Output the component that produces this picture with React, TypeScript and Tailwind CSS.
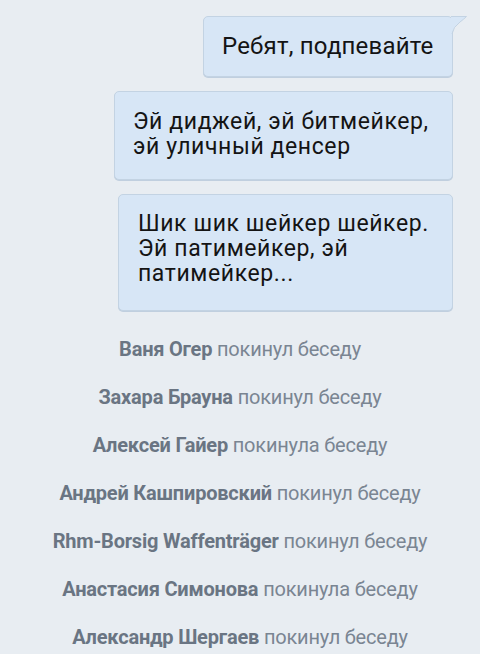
import React from 'react';

interface Notice {
  name: string;
  action: string;
}

const notices: Notice[] = [
  { name: 'Ваня Огер', action: 'покинул беседу' },
  { name: 'Захара Брауна', action: 'покинул беседу' },
  { name: 'Алексей Гайер', action: 'покинула беседу' },
  { name: 'Андрей Кашпировский', action: 'покинул беседу' },
  { name: 'Rhm-Borsig Waffenträger', action: 'покинул беседу' },
  { name: 'Анастасия Симонова', action: 'покинула беседу' },
  { name: 'Александр Шергаев', action: 'покинул беседу' },
];

const Bubble: React.FC<{ className: string; tail?: boolean; children: React.ReactNode }> = ({ className, tail, children }) => (
  <div className={`relative self-end rounded-[5px] border border-[#c3d3e3] bg-[#d7e6f6] text-[#141414] shadow-[0_1px_0_#c0cfdf] whitespace-nowrap ${className}`}>
    {children}
    {tail && (
      <svg className="absolute -right-[16px] -top-[1px]" width="17" height="19" viewBox="0 0 17 19">
        <path d="M0 1 L15 1 Q13 3 9 6 Q2 11 1 18 L0 18 Z" fill="#d7e6f6" />
        <path d="M0 0.5 L15.5 0.5 Q13 3 9 6 Q2 11 1 18" fill="none" stroke="#c3d3e3" strokeWidth="1" />
      </svg>
    )}
  </div>
);

const App: React.FC = () => {
  return (
    <div className="min-h-[654px] w-[480px] overflow-hidden bg-[#e8edf2] font-['Roboto',sans-serif]">
      <div className="flex flex-col pt-[16px] pr-[27px]">
        <Bubble tail className="w-[250px] h-[61px] pl-[18px] pt-[14px] text-[24px] leading-[30px] tracking-[0.2px]">
          Ребят, подпевайте
        </Bubble>
        <Bubble className="mt-[14px] w-[339px] h-[89px] pl-[18px] pt-[17px] text-[23px] leading-[25px] tracking-[0.6px]">
          Эй диджей, эй битмейкер,
          <br />
          эй уличный денсер
        </Bubble>
        <Bubble className="mt-[14px] w-[335px] h-[117px] pl-[19px] pt-[16px] text-[23px] leading-[25px] tracking-[0.6px]">
          Шик шик шейкер шейкер.
          <br />
          Эй патимейкер, эй
          <br />
          патимейкер...
        </Bubble>
      </div>

      <div className="mt-[26px] flex flex-col items-center gap-[24px] text-[#7a8592]">
        {notices.map((n) => (
          <p key={n.name} className="text-[20px] tracking-[-0.2px] leading-[24px] whitespace-nowrap">
            <span className="font-bold text-[#6a7583]">{n.name}</span> {n.action}
          </p>
        ))}
      </div>
    </div>
  );
};

export default App;
